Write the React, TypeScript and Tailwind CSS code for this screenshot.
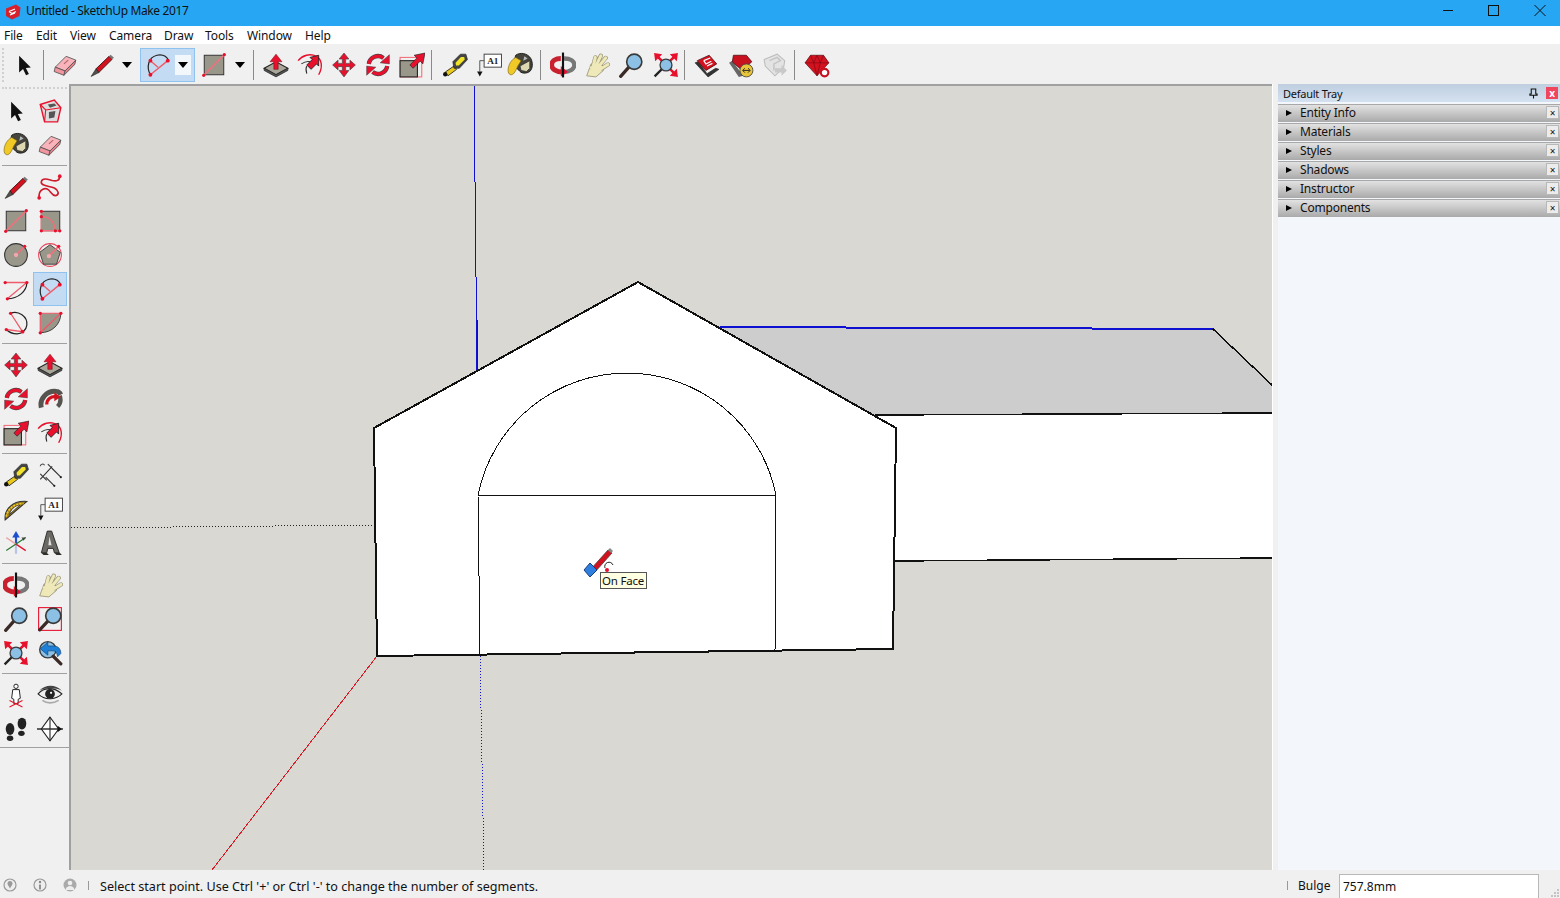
import React from 'react';

const Icon: React.FC<{ children: React.ReactNode }> = ({ children }) => (
  <svg viewBox="0 0 24 24" className="w-[26px] h-[26px] block">
    {children}
  </svg>
);

const Dot = ({ x, y, r = 1.5 }: { x: number; y: number; r?: number }) => <circle cx={x} cy={y} r={r} fill="#e8112d" />;

const Select = () => (
  <Icon>
    <path d="M7.5 3.5V19l3.6-3.2 2.8 5.6 2.6-1.2-2.8-5.4 4.6-.4z" fill="#111" />
  </Icon>
);
const Eraser = () => (
  <Icon>
    <path d="M3 14 13 4l9 3.5-10 10z" fill="#f8b4ba" stroke="#555" strokeWidth=".8" />
    <path d="M3 14l9 3.5-1 4-9-3.5z" fill="#f2959d" stroke="#555" strokeWidth=".8" />
    <path d="M12 17.500 22 7.500l-1 4-10 10z" fill="#e57f88" stroke="#555" strokeWidth=".8" />
    <path d="M11 11l4-3.500" stroke="#b06068" strokeWidth="1" />
  </Icon>
);
const Pencil = () => (
  <Icon>
    <path d="M6.500 15.500 18.500 4l2.800 2.800L9 19z" fill="#d3121f" stroke="#3a0b0e" strokeWidth=".8" />
    <path d="M6.500 15.500 2 22.500 9 19z" fill="#55504a" stroke="#222" strokeWidth=".6" />
    <path d="M18.500 4 20 2.500l3 2.800-1.700 1.500z" fill="#777" />
  </Icon>
);
const Arc2 = () => (
  <Icon>
    <path d="M5 21C1 14 3 5 11 3c5-1 9 1 11 5" fill="none" stroke="#222" strokeWidth="1.100" />
    <path d="M5 21 21 8M5 8l7 6" stroke="#ef5a68" strokeWidth="1.300" fill="none" />
    <Dot x={5} y={21} r={1.800} />
    <Dot x={21} y={8} r={1.800} />
    <Dot x={5} y={8} r={1.800} />
  </Icon>
);
const RectTool = () => (
  <Icon>
    <rect x="3" y="3" width="18" height="18" fill="#99978a" stroke="#333" strokeWidth=".9" />
    <path d="M2.500 21.500 21.500 2.500" stroke="#f36f7c" strokeWidth="1.500" />
    <Dot x={2.500} y={21.500} />
    <Dot x={21.500} y={2.500} />
  </Icon>
);
const RoundRect = () => (
  <Icon>
    <rect x="4" y="3" width="17" height="18" fill="#99978a" stroke="#333" strokeWidth=".9" />
    <path d="M4 8c8 0 12 5 13 13" stroke="#f36f7c" strokeWidth="1.300" fill="none" />
    <path d="M4 3v18h17" stroke="#f36f7c" strokeWidth="1.300" fill="none" />
    <Dot x={4} y={3} />
    <Dot x={4} y={8} />
    <Dot x={4} y={21} />
    <Dot x={17} y={21} />
    <Dot x={21} y={21} />
  </Icon>
);
const CircleTool = () => (
  <Icon>
    <circle cx="12" cy="12" r="10.500" fill="#99978a" stroke="#333" strokeWidth="1" />
    <path d="M12 12 20 4" stroke="#f36f7c" strokeWidth="1.500" />
    <circle cx="12" cy="12" r="2" fill="#f4a6ad" />
    <Dot x={20} y={4} />
  </Icon>
);
const PolygonTool = () => (
  <Icon>
    <circle cx="12" cy="12" r="10.500" fill="none" stroke="#e8475a" strokeWidth="1" />
    <path d="M12 2.500 21.500 9.500 18 20.500H6L2.500 9.500z" fill="#99978a" stroke="#333" strokeWidth=".8" />
    <path d="M11 13 20 4" stroke="#f36f7c" strokeWidth="1.500" />
    <circle cx="11" cy="13" r="2" fill="#f4a6ad" />
    <Dot x={20} y={4} />
  </Icon>
);
const Arc1 = () => (
  <Icon>
    <path d="M2 6h20L4 21" stroke="#ef5a68" strokeWidth="1.200" fill="none" />
    <path d="M22 6c0 8-8 15-18 15" stroke="#222" strokeWidth="1.100" fill="none" />
    <Dot x={2} y={6} />
    <Dot x={22} y={6} />
    <Dot x={4} y={21} />
  </Icon>
);
const Arc3 = () => (
  <Icon>
    <path d="M7 3C14 0 23 6 22 14c-.500 5-5 8-9 8-4 0-8-2-10-4" stroke="#222" strokeWidth="1.100" fill="none" />
    <path d="M7 3l11 17L3 18" stroke="#ef5a68" strokeWidth="1.200" fill="none" />
    <Dot x={7} y={3} />
    <Dot x={18} y={20} r={1.800} />
    <Dot x={3} y={18} />
  </Icon>
);
const Pie = () => (
  <Icon>
    <path d="M3 21c11 0 19-8 19-18L3 21z" fill="#99978a" stroke="#333" strokeWidth=".8" />
    <path d="M3 3h19L3 21z" fill="#99978a" />
    <path d="M3 3h19L3 21z" fill="none" stroke="#ef5a68" strokeWidth="1.100" />
    <Dot x={3} y={3} />
    <Dot x={22} y={3} />
    <Dot x={3} y={21} />
  </Icon>
);
const Freehand = () => (
  <Icon>
    <path d="M2 22C1 14 8 12 11 15c2 2 3 5 6 5 4-1 3-5-1-7C11 11 3 11 4 7c1-4 7-2 10-1 4 1 7 0 7-4" fill="none" stroke="#ce1a2b" strokeWidth="1.500" />
    <Dot x={2} y={22} r={1.700} />
    <Dot x={21} y={2} r={1.700} />
  </Icon>
);
const PushPull = () => (
  <Icon>
    <path d="M1 15 12 9l11 6-11 6z" fill="#a8a698" stroke="#222" strokeWidth="1" />
    <path d="M1 15v2l11 6 11-6v-2l-11 6z" fill="#555" stroke="#222" strokeWidth=".6" />
    <path d="M12 2 6.500 9H10v7h4V9h3.500z" fill="#e8112d" stroke="#7a0a14" strokeWidth=".5" />
  </Icon>
);
const FollowMe = () => (
  <Icon>
    <path d="M1 8c4-5 11-7 17-4 5 3 6 10 2 17" fill="none" stroke="#e8112d" strokeWidth="1.300" />
    <path d="M4 11c3-2 5-3 8-2M9 20c-1-3-1-5 0-7" fill="none" stroke="#333" strokeWidth="1" />
    <path d="M20 3l-8 2 2 2-5 5 4 4 5-5 2 2z" fill="#e8112d" stroke="#222" strokeWidth=".8" />
  </Icon>
);
const Move = () => (
  <Icon>
    <path d="M12 1l4.500 5.500h-3V10.500h4V7.500l5 4.500-5 4.500v-3h-4v3.500h3L12 23l-4.500-6h3v-3.500h-4v3l-5-4.500 5-4.500v3h4V6.500h-3z" fill="#e8112d" stroke="#444" strokeWidth=".6" />
  </Icon>
);
const Rotate = () => (
  <Icon>
    <path d="M3.500 11A8.500 8.500 0 0 1 17 5.500" fill="none" stroke="#444" strokeWidth="4" />
    <path d="M20.500 13A8.500 8.500 0 0 1 7 18.500" fill="none" stroke="#444" strokeWidth="4" />
    <path d="M3.500 11A8.500 8.500 0 0 1 17 5.500" fill="none" stroke="#e8112d" strokeWidth="3" />
    <path d="M20.500 13A8.500 8.500 0 0 1 7 18.500" fill="none" stroke="#e8112d" strokeWidth="3" />
    <path d="M22.500 2.500V11L14 10z" fill="#e8112d" stroke="#444" strokeWidth=".5" />
    <path d="M1.500 21.500V13L10 14z" fill="#e8112d" stroke="#444" strokeWidth=".5" />
  </Icon>
);
const Scale = () => (
  <Icon>
    <rect x="1" y="5" width="20" height="18" fill="none" stroke="#f36f7c" strokeWidth="1" />
    <rect x="1" y="8" width="16" height="15" fill="#99978a" stroke="#222" strokeWidth="1" />
    <path d="M24 1l-10 2 2.500 2.500L10 12l3 3 6.500-6.500L22 11z" fill="#e8112d" stroke="#222" strokeWidth=".6" />
  </Icon>
);
const Tape = () => (
  <Icon>
    <path d="M3 18.500 11 13l2.500 3-8 6z" fill="#e8c91c" stroke="#222" strokeWidth=".8" />
    <circle cx="3" cy="20.500" r="2" fill="#111" />
    <path d="M10 9l7-7h5l1.500 5-7.500 8h-5z" fill="#444" stroke="#222" strokeWidth=".6" />
    <path d="M12.500 10l5-5.500h3l.5 2.500-5.500 5.500h-2.500z" fill="#f2e22a" />
  </Icon>
);
const TextTool = () => (
  <Icon>
    <rect x="7.500" y="2" width="16" height="12" fill="#fff" stroke="#444" strokeWidth=".9" />
    <text x="15.500" y="11" textAnchor="middle" fontFamily="Liberation Serif" fontSize="8.500" fontWeight="700" fill="#222">A1</text>
    <path d="M7.500 8H3.500v10" fill="none" stroke="#555" strokeWidth=".9" />
    <path d="M1 18h5l-2.500 4.500z" fill="#111" />
  </Icon>
);
const Paint = () => (
  <Icon>
    <path d="M8 3c4-3 11-2 14 3 2 4 2 9-1 12-3 2-7 2-9 0L6 12z" fill="#45443d" stroke="#111" strokeWidth=".8" />
    <path d="M12 13l9-5v7l-3 3-5-1z" fill="#ded8b2" stroke="#222" strokeWidth=".6" />
    <path d="M16 4l3 2-4 2z" fill="#bbb" />
    <path d="M8 5C4 7 1 12 1 17c0 4 3 5 5 3 2-2 3-5 4-7l3-5z" fill="#f1c926" stroke="#7a6412" strokeWidth=".6" />
  </Icon>
);
const Orbit = () => (
  <Icon>
    <path d="M13 6c6 0 9.500 2.500 9.500 6s-4 6.500-10 6.500" fill="none" stroke="#777" strokeWidth="4" />
    <path d="M10 6c-5 0-8.500 2.500-8.500 6 0 4 5 6.500 10 6.500" fill="none" stroke="#c8202e" strokeWidth="4.500" />
    <path d="M10 13l6.500 5.500-6.500 4z" fill="#e8112d" />
    <path d="M12 .5v23" stroke="#111" strokeWidth="2" />
  </Icon>
);
const Pan = () => (
  <Icon>
    <path d="M2.500 22 6.500 11 17 12l1 5-7 6z" fill="#efe9b9" stroke="#99967a" strokeWidth=".8" />
    <path d="M8 15 10.500 5M10.500 14 15.500 3.500M13 14 20 5.500M15 16l7-4.500" fill="none" stroke="#99967a" strokeWidth="4" strokeLinecap="round" />
    <path d="M8 15 10.500 5M10.500 14 15.500 3.500M13 14 20 5.500M15 16l7-4.500" fill="none" stroke="#efe9b9" strokeWidth="2.800" strokeLinecap="round" />
    <path d="M5 14 9 12 17 13 16 18 9 21z" fill="#efe9b9" />
  </Icon>
);
const Zoom = () => (
  <Icon>
    <path d="M2.500 22.500 10 14" stroke="#3b2a26" strokeWidth="3" strokeLinecap="round" />
    <circle cx="15" cy="9" r="7" fill="#8cc0e4" stroke="#3a3a3a" strokeWidth="1.500" />
  </Icon>
);
const ZoomWindow = () => (
  <Icon>
    <rect x="1.500" y="1.500" width="21" height="21" fill="none" stroke="#e8112d" strokeWidth="1" />
    <path d="M2.500 22 10 14" stroke="#3b2a26" strokeWidth="3" strokeLinecap="round" />
    <circle cx="15" cy="9" r="7" fill="#8cc0e4" stroke="#3a3a3a" strokeWidth="1.500" />
  </Icon>
);
const ZoomExtents = () => (
  <Icon>
    <path d="M1.500 22.500 9 15" stroke="#222" strokeWidth="2.200" />
    <path d="M4 4 20 20M20 4 15 9" stroke="#222" strokeWidth="1.100" />
    <path d="M4 4 8 8M20 4l-4 4M20 20l-4-4" stroke="#e8112d" strokeWidth="2.400" />
    <path d="M1 1l7.500 1L2 8.500zM23 1l-7.500 1L22 8.500zM23 23l-7.500-1 6.500-6.500z" fill="#e8112d" />
    <circle cx="12" cy="12" r="5.500" fill="#8cc0e4" stroke="#3a3a3a" strokeWidth="1.200" />
  </Icon>
);
const PreviousView = () => (
  <Icon>
    <circle cx="10" cy="9" r="7.500" fill="#8cc0e4" stroke="#3a3a3a" strokeWidth="1.300" />
    <path d="M3 8l7-6v3.500h5c5 0 7 3 7 7l-3 3-1-4c-1-1-2-1.500-4-1.500h-4V14z" fill="#1e7fd6" stroke="#0d3f73" strokeWidth=".6" />
    <path d="M15 15l7 7" stroke="#3b2a26" strokeWidth="3" strokeLinecap="round" />
  </Icon>
);
const Warehouse = () => (
  <Icon>
    <path d="M1 10l3-1 8 11 8-5 3 1-10 7z" fill="#333" stroke="#222" strokeWidth=".6" />
    <path d="M3 8l11-5 7 8-10 6z" fill="#d3121f" stroke="#4a0a0e" strokeWidth=".7" />
    <path d="M9 8l6-2.500M9 8l2 3 5-2.500M12 13l5-2.500" stroke="#fff" strokeWidth="1.100" fill="none" />
  </Icon>
);
const ExtWarehouse = () => (
  <Icon>
    <path d="M1 10l3-2 10 14-4 1z" fill="#666" />
    <path d="M5 3h12l5 6-9 8-9-8z" fill="#c8101f" stroke="#4a0a0e" strokeWidth=".7" />
    <circle cx="17" cy="17" r="6" fill="#e8c43a" stroke="#444" strokeWidth=".8" />
    <path d="M14 17h6M15.500 15l-2 2 2 2M18.500 15l2 2-2 2" stroke="#222" strokeWidth=".9" fill="none" />
  </Icon>
);
const Share = () => (
  <Icon>
    <path d="M2 7 14 2l7 6-1 6-8 8-9-9z" fill="#e3e3e3" stroke="#bdbdbd" strokeWidth="1" />
    <path d="M7 8l7-3 3 3-6 3v6" fill="none" stroke="#c4c4c4" strokeWidth="1.300" />
    <path d="M12 15h6v-3l5 5-5 5v-3h-6z" fill="#c9c9c9" />
  </Icon>
);
const Ruby = () => (
  <Icon>
    <path d="M6 3h12l5 7-11 12L1 10z" fill="#d3121f" stroke="#4a0a0e" strokeWidth=".6" />
    <path d="M1 10h22M6 3l3 7 3-7 3 7 3-7M9 10l3 12 3-12" fill="none" stroke="#7d0812" strokeWidth=".6" />
    <circle cx="19" cy="19" r="3.500" fill="#fff" stroke="#c8101f" strokeWidth="2" />
  </Icon>
);
const MakeComponent = () => (
  <Icon>
    <path d="M3 6 16 2l6 7-3 13-12 0z" fill="#ddd" stroke="#e8112d" strokeWidth="1.300" />
    <path d="M3 6l5 5 14-2M8 11l-1 11" stroke="#e8112d" strokeWidth="1" fill="none" />
    <path d="M10 6l6-1 2 2-6 2zM11 13l6-1-1 6-5 1z" fill="#555" />
  </Icon>
);
const Offset = () => (
  <Icon>
    <path d="M4 20C2 12 9 4 18 5c2 0 3 1 4 3" fill="none" stroke="#55544e" strokeWidth="4.500" />
    <path d="M21 9c1 3 1 7-2 10" fill="none" stroke="#55544e" strokeWidth="4" />
    <path d="M9 17c0-5 4-8 9-7" fill="none" stroke="#d3121f" strokeWidth="3" />
    <path d="M16 6l6 4-6 4z" fill="#d3121f" />
  </Icon>
);
const Protractor = () => (
  <Icon>
    <path d="M2 22C1 13 8 4 22 5L2 22z" fill="#9a7b1a" stroke="#333" strokeWidth="1" />
    <path d="M6 17c1-4 4-8 10-9z" fill="#f1f1f1" stroke="#333" strokeWidth=".8" />
    <path d="M3 19c1-6 6-12 16-12" fill="none" stroke="#f1c926" strokeWidth="1.500" strokeDasharray="2 1" />
  </Icon>
);
const Dimension = () => (
  <Icon>
    <path d="M3 16 14 4M3 11l6 6M10 2l6 6M8 14l8 8M14 6l8 8" stroke="#333" strokeWidth="1" fill="none" />
    <circle cx="16" cy="22" r="1" fill="#222" />
    <circle cx="22" cy="14" r="1" fill="#222" />
    <path d="M3 4c0-2 3-3 4-1" stroke="#444" fill="none" />
  </Icon>
);
const Axes = () => (
  <Icon>
    <path d="M12 14V3" stroke="#1d4fd0" strokeWidth="2" />
    <path d="M12 1l-3.500 6h7z" fill="#1d4fd0" />
    <path d="M12 14v8" stroke="#b7c4e6" strokeWidth="2" />
    <path d="M12 13l9 6" stroke="#e8112d" strokeWidth="1.300" />
    <path d="M3 7l9 6" stroke="#e9a4a4" strokeWidth="1.300" />
    <path d="M12 13l9-6M3 19l9-6" stroke="#2b7a30" strokeWidth="1.100" />
    <path d="M21 7l-4 0 2 3z" fill="#444" />
  </Icon>
);
const Text3d = () => (
  <Icon>
    <path d="M9.500 1h4l7 20h-4.500l-1-4H10l-1 4H4z" fill="#6a6963" stroke="#222" strokeWidth=".8" />
    <path d="M11.500 6l-1 8h3z" fill="#ddd" />
    <path d="M4 21l2 2h5l-2-2zM16 21l2 2h5l-2-2z" fill="#2f2e2a" />
  </Icon>
);
const Position = () => (
  <Icon>
    <circle cx="12" cy="4" r="2" fill="#fff" stroke="#222" strokeWidth=".9" />
    <path d="M9 7h6l1 8-2 1v4h-4v-4l-2-1z" fill="#fff" stroke="#222" strokeWidth=".9" />
    <path d="M6 17l12 6M18 17 6 23" stroke="#e8112d" strokeWidth="1" />
  </Icon>
);
const Eye = () => (
  <Icon>
    <path d="M1 11c5-6 14-7 22 0-5 5-15 7-22 0z" fill="#efefef" stroke="#222" strokeWidth="1" />
    <path d="M2 8c6-6 15-6 21 0-6-3-15-3-21 0z" fill="#444" />
    <circle cx="12" cy="11" r="4.500" fill="#222" />
    <circle cx="13" cy="10" r="1" fill="#fff" />
    <path d="M5 17c4 3 10 3 15 0" stroke="#aaa" strokeWidth="1.500" fill="none" />
  </Icon>
);
const Walk = () => (
  <Icon>
    <ellipse cx="6.500" cy="12" rx="4" ry="5.500" fill="#222" />
    <ellipse cx="6.500" cy="20.500" rx="3" ry="2.500" fill="#222" />
    <ellipse cx="17.500" cy="7" rx="4" ry="5.500" fill="#222" />
    <ellipse cx="17" cy="16" rx="3" ry="2.500" fill="#222" />
  </Icon>
);
const Section = () => (
  <Icon>
    <path d="M12 1 4 12l8 11 8-11z" fill="#fff" stroke="#222" strokeWidth="1" />
    <path d="M0 12h24" stroke="#222" strokeWidth="1.300" />
    <path d="M12 1v22" stroke="#222" strokeWidth="1" />
    <path d="M23 12l-4-3v6z" fill="#111" />
  </Icon>
);

const Button: React.FC<{ children: React.ReactNode; active?: boolean; className?: string }> = ({ children, active, className }) => (
  <div className={`h-[34px] flex items-center justify-center ${active ? 'bg-[#c4dcf3] border border-[#8fc2ef]' : ''} ${className ?? 'w-[34px]'}`}>
    {children}
  </div>
);

const Caret = () => <div className="w-0 h-0 border-x-[5.500px] border-x-transparent border-t-[6px] border-t-black" />;
const VSep = ({ className }: { className: string }) => <div className={`w-px h-[30px] bg-[#8a8a8a] ${className}`} />;
const HSep = () => (
  <div className="h-[8px] pt-[3px] px-[2px]">
    <div className="h-px w-full bg-[#a0a0a0]" />
  </div>
);

const menuItems = [
  { label: 'File', className: 'w-[32px]' },
  { label: 'Edit', className: 'w-[34px]' },
  { label: 'View', className: 'w-[39px]' },
  { label: 'Camera', className: 'w-[55px]' },
  { label: 'Draw', className: 'w-[41px]' },
  { label: 'Tools', className: 'w-[42px]' },
  { label: 'Window', className: 'w-[58px]' },
  { label: 'Help', className: 'w-[40px]' },
];

const trayItems = ['Entity Info', 'Materials', 'Styles', 'Shadows', 'Instructor', 'Components'];

const leftSections = [
  [Select, MakeComponent, Paint, Eraser],
  [Pencil, Freehand, RectTool, RoundRect, CircleTool, PolygonTool, Arc1, Arc2, Arc3, Pie],
  [Move, PushPull, Rotate, Offset, Scale, FollowMe],
  [Tape, Dimension, Protractor, TextTool, Axes, Text3d],
  [Orbit, Pan, Zoom, ZoomWindow, ZoomExtents, PreviousView],
  [Position, Eye, Walk, Section],
];

const Canvas = () => (
  <svg viewBox="71 86 1201 784" className="w-full h-full block">
    <g shapeRendering="crispEdges">
      <path d="M720 327 1213 329 1272 385V413L875 415z" fill="#cdcdcd" />
      <path d="M875 415 1272 413V558L893 561z" fill="#fff" />
      <path d="M374 428 638 282 896 428 893 649 377 656z" fill="#fff" />
      <path d="M474 86 477 370" stroke="#1010d0" strokeWidth="1" fill="none" />
      <path d="M477 320 477 370" stroke="#222" strokeWidth="1" fill="none" />
      <path d="M480 656 484 870" stroke="#1010d0" strokeWidth="1" strokeDasharray="1 2" fill="none" />
      <path d="M71 528 374 525" stroke="#222" strokeWidth="1" strokeDasharray="1 2" fill="none" />
      <path d="M377 656 212 870" stroke="#d8202c" strokeWidth="1" fill="none" />
      <path d="M720 327 1213 329" stroke="#1010d0" strokeWidth="2" fill="none" />
      <path d="M1213 329 1272 385M875 415 1272 413M893 561 1272 558" stroke="#111" strokeWidth="1.500" fill="none" />
      <path d="M374 428 638 282 896 428 893 649 377 656z" stroke="#111" strokeWidth="2" fill="none" />
      <path d="M478 495H776M478 495 480 655M776 495 775 651" stroke="#111" strokeWidth="1" fill="none" />
      <path d="M478 495A152 152 0 0 1 776 495" stroke="#111" strokeWidth="1" fill="none" />
    </g>
    {/* paint cursor */}
    <path d="M590 570 608 550 612 553 595 572z" fill="#d3121f" stroke="#444" strokeWidth=".8" />
    <path d="M608 550l2-2 3 3-2 2z" fill="#888" />
    <path d="M590 563 597 570 590 577 584 570z" fill="#2f7fe0" stroke="#173f7a" strokeWidth="1" />
    <path d="M605 568a4 4 0 0 1 8-3" fill="none" stroke="#222" strokeWidth="1" />
    <circle cx="607" cy="570" r="2" fill="#e8112d" />
  </svg>
);

export default function App() {
  return (
    <div className="w-[1560px] h-[898px] flex flex-col overflow-hidden bg-[#f0f0f0] text-[12px] text-[#111]" style={{ fontFamily: '"Noto Sans", sans-serif' }}>
      {/* Title bar */}
      <div className="h-[26px] bg-[#27a6f3] flex items-center">
        <svg viewBox="0 0 16 16" className="w-[16px] h-[16px] ml-[5px] -mt-[3px]">
          <path d="M1 4.500 11 .5l4.500 3-1 8.500-7.500 3.500-6-3.500z" fill="#d8202c" />
          <path d="M4 7.500l6-2.500M4 7.500l3 2 4-2M5 11l5-2" stroke="#fff" strokeWidth="1.100" fill="none" />
        </svg>
        <span className="ml-[5px] -mt-[4px] tracking-[-0.37px]">Untitled - SketchUp Make 2017</span>
        <div className="ml-auto flex items-center">
          <svg viewBox="0 0 46 26" className="w-[46px] h-[26px]"><path d="M21 10.500H31" stroke="#111" /></svg>
          <svg viewBox="0 0 46 26" className="w-[46px] h-[26px]"><rect x="20.500" y="5.500" width="10" height="10" fill="none" stroke="#111" /></svg>
          <svg viewBox="0 0 46 26" className="w-[46px] h-[26px]"><path d="M20.500 5l11 11M31.500 5l-11 11" stroke="#111" /></svg>
        </div>
      </div>

      {/* Menu bar */}
      <div className="h-[18px] bg-white flex items-center pl-[4px] pt-[2px] tracking-[-0.1px]">
        {menuItems.map((item) => (
          <span key={item.label} className={item.className}>{item.label}</span>
        ))}
      </div>

      {/* Main toolbar */}
      <div className="h-[40px] flex items-center pt-[2px] relative">
        <div className="absolute left-[2px] top-[4px] h-[34px] border-l-2 border-dotted border-[#d0d0d0]" />
        <Button className="w-[34px] ml-[7px]"><Select /></Button>
        <VSep className="ml-[2px] mr-[4px]" />
        <Button><Eraser /></Button>
        <Button className="w-[34px] ml-[3px]"><Pencil /></Button>
        <Button className="w-[16px]"><Caret /></Button>
        <div className="ml-[5px] flex h-[34px] w-[55px] items-center bg-[#c4dcf3] border border-[#8fc2ef]">
          <div className="w-[34px] flex justify-center"><Arc2 /></div>
          <div className="w-[16px] h-[20px] bg-[#f2f7fc] flex items-center justify-center"><Caret /></div>
        </div>
        <Button className="w-[34px] ml-[2px]"><RectTool /></Button>
        <Button className="w-[16px] ml-px"><Caret /></Button>
        <VSep className="ml-[5px] mr-[5px]" />
        <Button><PushPull /></Button>
        <Button><FollowMe /></Button>
        <Button><Move /></Button>
        <Button><Rotate /></Button>
        <Button><Scale /></Button>
        <VSep className="ml-[2px] mr-[6px]" />
        <Button><Tape /></Button>
        <Button><TextTool /></Button>
        <Button className="w-[31px] -ml-[2px]"><Paint /></Button>
        <VSep className="ml-[5px] mr-[5px]" />
        <Button><Orbit /></Button>
        <Button><Pan /></Button>
        <Button><Zoom /></Button>
        <Button className="w-[34px] ml-px"><ZoomExtents /></Button>
        <VSep className="ml-px mr-[5px]" />
        <Button><Warehouse /></Button>
        <Button><ExtWarehouse /></Button>
        <Button><Share /></Button>
        <VSep className="ml-[2px] mr-[5px]" />
        <Button><Ruby /></Button>
      </div>

      {/* Work area */}
      <div className="h-[786px] flex">
        <div className="w-[69px] pt-[3px]">
          <div className="h-[7px] mx-[2px] border-t-2 border-dotted border-[#d0d0d0]" />
          {leftSections.map((section, i) => (
            <div key={i}>
              {i > 0 && <HSep />}
              <div className="grid grid-cols-2 w-[68px] -ml-px">
                {section.map((Tool, j) => (
                  <Button key={j} active={Tool === Arc2}><Tool /></Button>
                ))}
              </div>
            </div>
          ))}
          <div className="mt-px h-px bg-[#a0a0a0]" />
        </div>
        <div className="w-[1203px] bg-[#d9d8d3] border-l-2 border-t-2 border-[#a0a0a0] relative">
          <Canvas />
          <div className="absolute left-[529px] top-[486px] h-[17px] w-[47px] bg-[#ffffe1] border border-[#555] text-[11.5px] leading-[15px] pl-[1px] tracking-[-0.2px]">
            On Face
          </div>
        </div>
        <div className="w-[6px] border-l border-white" />
        <div className="w-[282px] bg-[#f3f6fb]">
          <div className="h-[18px] bg-gradient-to-b from-[#bfcfe0] to-[#d4e1f0] flex items-center pl-[5px] pr-[2px] text-[11px] tracking-[-0.25px]">
            <span className="pt-[3px]">Default Tray</span>
            <svg viewBox="0 0 10 12" className="ml-auto mr-[8px] w-[9px] h-[11px]">
              <path d="M2.500 1h5v5.500h1.500V8H1V6.500h1.500zM5 8v3.500" fill="none" stroke="#111" strokeWidth="1.200" />
            </svg>
            <div className="w-[12px] h-[12px] bg-[#f0455c] text-white flex items-center justify-center text-[10px] leading-none font-bold">x</div>
          </div>
          <div className="pt-[2px] flex flex-col gap-px">
            {trayItems.map((item) => (
              <div key={item} className="h-[18px] bg-gradient-to-b from-[#e2e2e2] to-[#aaaaaa] border-t border-[#a8a8a8] flex items-center pl-[8px] pr-[1px]">
                <div className="w-0 h-0 border-y-[3.500px] border-y-transparent border-l-[6px] border-l-black -mt-px" />
                <span className="ml-[8px] -mt-[2px] tracking-[-0.2px]">{item}</span>
                <div className="ml-auto -mt-[2px] w-[13px] h-[13px] bg-[#ececec] border border-[#b8b8b8] flex items-center justify-center text-[10px] leading-none">×</div>
              </div>
            ))}
          </div>
        </div>
      </div>

      {/* Status bar */}
      <div className="h-[28px] flex items-center relative pt-[2px]">
        <svg viewBox="0 0 14 14" className="ml-[3px] w-[14px] h-[14px]">
          <circle cx="7" cy="7" r="6" fill="#eee" stroke="#999" strokeWidth="1.200" />
          <path d="M4.500 5.500a2.500 2.500 0 1 1 5 0c0 1.500-1.500 3-2.500 5-1-2-2.500-3.500-2.500-5z" fill="#999" />
        </svg>
        <svg viewBox="0 0 14 14" className="ml-[16px] w-[14px] h-[14px]">
          <circle cx="7" cy="7" r="6" fill="#eee" stroke="#999" strokeWidth="1.200" />
          <circle cx="7" cy="4" r="1.200" fill="#888" />
          <path d="M7 6.500v5" stroke="#888" strokeWidth="1.800" />
        </svg>
        <svg viewBox="0 0 14 14" className="ml-[16px] w-[14px] h-[14px]">
          <circle cx="7" cy="7" r="6.500" fill="#aaa" />
          <circle cx="7" cy="5" r="2.300" fill="#eee" />
          <path d="M2.500 12c.500-3 2.500-4 4.500-4s4 1 4.500 4z" fill="#eee" />
        </svg>
        <div className="ml-[11px] w-px h-[9px] bg-[#999]" />
        <span className="ml-[11px] mt-[4px] text-[12.6px]">Select start point. Use Ctrl '+' or Ctrl '-' to change the number of segments.</span>
        <div className="ml-auto w-px h-[9px] bg-[#999]" />
        <span className="ml-[10px] mt-[2px] w-[41px]">Bulge</span>
        <div className="w-[200px] h-[24px] self-end bg-white border border-b-0 border-[#b8b8b8] pl-[3px] leading-[24px]">757.8mm</div>
        <div className="w-[21px]" />
        <svg viewBox="0 0 8 8" className="absolute right-[1px] bottom-[1px] w-[8px] h-[8px]">
          <path d="M6 0h2v2H6zM3 3h2v2H3zM6 3h2v2H6zM0 6h2v2H0zM3 6h2v2H3zM6 6h2v2H6z" fill="#c4c4c4" />
        </svg>
      </div>
    </div>
  );
}
